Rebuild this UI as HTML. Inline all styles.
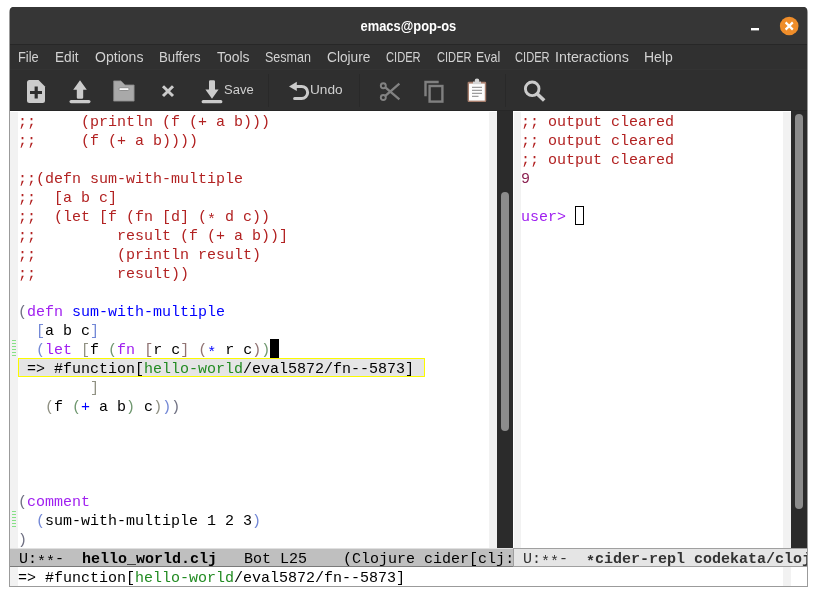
<!DOCTYPE html>
<html lang="en">
<head>
<meta charset="utf-8">
<title>emacs@pop-os</title>
<style>
html,body{margin:0;padding:0;background:#fff;}
body{width:817px;height:596px;position:relative;overflow:hidden;font-family:"Liberation Sans",sans-serif;}
.abs{position:absolute;}
#chrome,#ed{will-change:transform;}
#win{position:absolute;left:9px;top:7px;width:799px;height:580px;background:#9b9b9b;border-radius:5px 5px 0 0;}
#chrome{position:absolute;left:10px;top:7px;width:797px;height:104px;background:#2e2e2e;border-radius:4px 4px 0 0;overflow:hidden;}
#title{position:absolute;left:0;top:0;width:797px;height:37px;background:#363636;}
#tsep{position:absolute;left:0;top:37px;width:797px;height:1px;background:#272727;}
#menubar{position:absolute;left:0;top:38px;width:797px;height:24px;background:#303030;}
#toolbar{position:absolute;left:0;top:62px;width:797px;height:42px;background:#2f2f2f;box-shadow:inset 0 1px 0 #333,inset 0 -1px 0 #272727;}
#ttext{position:absolute;left:0;width:797px;top:8.5px;height:20px;line-height:20px;text-align:center;color:#fff;font-weight:bold;font-size:15px;transform:scaleX(0.86);transform-origin:398px 50%;}
.mi{position:absolute;top:3px;height:18px;line-height:18px;font-size:14.5px;color:#d2d2d2;white-space:pre;transform-origin:0 50%;}
.tl{position:absolute;top:12px;height:18px;line-height:18px;font-size:13px;color:#cfcfcf;white-space:pre;transform-origin:0 50%;}
.vsep{position:absolute;top:5px;width:1px;height:33px;background:#292929;}
#ed{position:absolute;left:10px;top:111px;width:797px;height:475px;background:#fff;overflow:hidden;}
.fr{position:absolute;background:#f2f2f2;width:8px;}
.sb{position:absolute;background:#2b2b2b;width:16px;}
.th{position:absolute;background:#8c8c8c;border-radius:4px;width:8px;}
.code{font-family:"Liberation Mono","DejaVu Sans Mono",monospace;font-size:15px;}
.ln{position:absolute;height:19px;line-height:24.4px;white-space:pre;color:#000;letter-spacing:0;}
.a{position:relative;top:2.6px;}
.c{color:#b22222;}
.k{color:#a020f0;}
.f{color:#0000ff;}
.t{color:#228b22;}
.s{color:#8b2252;}
.d1{color:#707183;}.d2{color:#7388d6;}.d3{color:#909183;}.d4{color:#709870;}.d5{color:#907373;}
.ml{position:absolute;height:19px;line-height:19px;white-space:pre;box-sizing:border-box;overflow:hidden;}
</style>
</head>
<body>
<div id="win"></div>
<div id="chrome">
  <div id="title"></div>
  <div id="ttext">emacs@pop-os</div>
  <div id="tsep"></div>
  <!-- window controls -->
  <svg class="abs" style="left:730px;top:0" width="67" height="38" viewBox="0 0 67 38">
    <rect x="11" y="21" width="8" height="2.4" fill="#fff"/>
    <circle cx="49.2" cy="19" r="9.3" fill="#ef8d2a"/>
    <path d="M45.6 15.4 L52.8 22.6 M52.8 15.4 L45.6 22.6" stroke="#fff" stroke-width="2.2" fill="none"/>
  </svg>
  <div id="menubar">
    <span class="mi" id="m0" style="left:7.8px;transform:scaleX(0.886)">File</span>
    <span class="mi" id="m1" style="left:44.7px;transform:scaleX(0.938)">Edit</span>
    <span class="mi" id="m2" style="left:84.5px;transform:scaleX(0.969)">Options</span>
    <span class="mi" id="m3" style="left:149.0px;transform:scaleX(0.911)">Buffers</span>
    <span class="mi" id="m4" style="left:206.5px;transform:scaleX(0.961)">Tools</span>
    <span class="mi" id="m5" style="left:254.5px;transform:scaleX(0.865)">Sesman</span>
    <span class="mi" id="m6" style="left:316.5px;transform:scaleX(0.944)">Clojure</span>
    <span class="mi" id="m7" style="left:375.8px;transform:scaleX(0.768)">CIDER</span>
    <span class="mi" id="m8" style="left:426.5px;transform:scaleX(0.766)">CIDER</span>
    <span class="mi" id="m9" style="left:465.9px;transform:scaleX(0.856)">Eval</span>
    <span class="mi" id="m10" style="left:505.2px;transform:scaleX(0.768)">CIDER</span>
    <span class="mi" id="m11" style="left:544.5px;transform:scaleX(0.985)">Interactions</span>
    <span class="mi" id="m12" style="left:634.0px;transform:scaleX(0.964)">Help</span>
  </div>
  <div id="toolbar">
    <span class="tl" style="left:214px">Save</span>
    <span class="tl" style="left:300px;transform:scaleX(1.05)">Undo</span>
    <div class="vsep" style="left:258px"></div>
    <div class="vsep" style="left:349px"></div>
    <div class="vsep" style="left:495px"></div>
    <svg class="abs" style="left:0;top:0" width="797" height="42" viewBox="10 69 797 42">
      <!-- new file -->
      <path d="M29.5 80 H38.5 L45 86.5 V100.5 Q45 103 42.5 103 H29.5 Q27 103 27 100.5 V82.5 Q27 80 29.5 80 Z" fill="#cbcbcb"/>
      <path d="M30 92.5 H42 M36.2 86.6 V98.6" stroke="#2e2e2e" stroke-width="3.2" fill="none"/>
      <!-- open (upload) -->
      <path d="M80 80.2 L86.8 89.8 H83.2 V97.5 Q83.2 98.8 81.9 98.8 H78.1 Q76.8 98.8 76.8 97.5 V89.8 H73.2 Z" fill="#cbcbcb"/>
      <rect x="69.5" y="100" width="21" height="3.2" rx="1.6" fill="#cbcbcb"/>
      <!-- folder -->
      <path d="M113.7 80.9 H121 L125 85 H134.1 V101.1 H113.7 Z" fill="#a9a9a9" stroke="#8a8a8a" stroke-width="0.8"/>
      <rect x="118.9" y="87.7" width="10.2" height="2.8" rx="1.2" fill="#fafafa" stroke="#8c8c8c" stroke-width="1"/>
      <!-- close x -->
      <path d="M163 86.2 L173 96 M173 86.2 L163 96" stroke="#cbcbcb" stroke-width="3" fill="none"/>
      <!-- save (download) -->
      <path d="M212 98.8 L205.4 89.6 H209 V81.6 Q209 80.3 210.3 80.3 H213.7 Q215 80.3 215 81.6 V89.6 H218.6 Z" fill="#cbcbcb"/>
      <rect x="201.6" y="100.1" width="20.8" height="3.1" rx="1.55" fill="#cbcbcb"/>
      <!-- undo -->
      <path d="M289 86.4 L296.8 81.8 V91 Z" fill="#cbcbcb"/>
      <path d="M296 86.4 H301.6 A6.05 6.05 0 0 1 301.6 98.5 H294.6" stroke="#cbcbcb" stroke-width="3" fill="none" stroke-linecap="round"/>
      <!-- cut -->
      <g stroke="#828282" fill="none" stroke-width="1.9">
        <circle cx="383.3" cy="85.8" r="2.5"/>
        <circle cx="383.3" cy="97.5" r="2.5"/>
        <path d="M385.3 87.4 L399.4 99.3 M385.3 95.9 L399.4 83.7" stroke-width="2.3"/>
      </g>
      <!-- copy -->
      <g stroke="#808080" fill="none" stroke-width="2.4">
        <path d="M425.5 96.3 V82 H438.7"/>
        <rect x="429.6" y="86" width="12.8" height="15.6"/>
      </g>
      <!-- paste -->
      <rect x="467.6" y="81.8" width="18.6" height="20.2" rx="1.2" fill="#a87f6e"/>
      <rect x="469" y="83.6" width="15.8" height="17" fill="#fdfdfd"/>
      <circle cx="477" cy="80.8" r="2.3" fill="#d5d5d5"/>
      <rect x="473" y="81.6" width="8" height="2.6" fill="#d5d5d5"/>
      <path d="M472 87.3 H482 M472 90.3 H482 M472 93.3 H482 M472 96.3 H478.5" stroke="#777" stroke-width="0.9" fill="none"/>
      <!-- search -->
      <circle cx="532.2" cy="88.8" r="6.8" stroke="#cbcbcb" stroke-width="2.9" fill="none"/>
      <path d="M537.3 94 L544.2 100.5" stroke="#cbcbcb" stroke-width="3.6" fill="none"/>
    </svg>
  </div>
</div>

<div id="ed" class="code">
  <!-- fringes -->
  <div class="fr" style="left:0;top:1px;height:436px"></div>
  <div class="fr" style="left:479px;top:1px;height:436px"></div>
  <div class="fr" style="left:503.5px;top:1px;height:436px;width:7.5px"></div>
  <div class="fr" style="left:773px;top:1px;height:436px"></div>
  <div class="fr" style="left:0;top:456px;height:19px"></div>
  <div class="fr" style="left:773px;top:456px;height:19px"></div>
  <!-- scrollbars -->
  <div class="sb" style="left:487px;top:0;height:437px"></div>
  <div class="th" style="left:491px;top:80.5px;height:239.5px"></div>
  <div class="sb" style="left:781px;top:0;height:437px"></div>
  <div class="th" style="left:785px;top:3px;height:395px"></div>

  <!-- left buffer -->
  <div class="ln c" style="left:8px;top:0px">;;     (println (f (+ a b)))</div>
  <div class="ln c" style="left:8px;top:19px">;;     (f (+ a b))))</div>
  <div class="ln c" style="left:8px;top:57px">;;(defn sum-with-multiple</div>
  <div class="ln c" style="left:8px;top:76px">;;  [a b c]</div>
  <div class="ln c" style="left:8px;top:95px">;;  (let [f (fn [d] (<span class="a">*</span> d c))</div>
  <div class="ln c" style="left:8px;top:114px">;;         result (f (+ a b))]</div>
  <div class="ln c" style="left:8px;top:133px">;;         (println result)</div>
  <div class="ln c" style="left:8px;top:152px">;;         result))</div>
  <div class="ln" style="left:8px;top:190px"><span class="d1">(</span><span class="k">defn</span> <span class="f">sum-with-multiple</span></div>
  <div class="ln" style="left:8px;top:209px">  <span class="d2">[</span>a b c<span class="d2">]</span></div>
  <div class="ln" style="left:8px;top:228px">  <span class="d2">(</span><span class="k">let</span> <span class="d3">[</span>f <span class="d4">(</span><span class="k">fn</span> <span class="d5">[</span>r c<span class="d5">]</span> <span class="d5">(</span><span class="f a">*</span> r c<span class="d5">)</span><span class="d4">)</span></div>
  <div class="abs" style="left:260px;top:228px;width:9px;height:19px;background:#000"></div>
  <div class="abs" style="left:8px;top:247px;width:407px;height:19px;background:#e5e5e5;box-sizing:border-box;border:1px solid #fbfb00"></div>
  <div class="ln" style="left:8px;top:247px"> =&gt; #function[<span class="t">hello-world</span>/eval5872/fn--5873]</div>
  <div class="ln" style="left:8px;top:266px">        <span class="d3">]</span></div>
  <div class="ln" style="left:8px;top:285px">   <span class="d3">(</span>f <span class="d4">(</span><span class="f">+</span> a b<span class="d4">)</span> c<span class="d3">)</span><span class="d2">)</span><span class="d1">)</span></div>
  <div class="ln" style="left:8px;top:380px"><span class="d1">(</span><span class="k">comment</span></div>
  <div class="ln" style="left:8px;top:399px">  <span class="d2">(</span>sum-with-multiple 1 2 3<span class="d2">)</span></div>
  <div class="ln" style="left:8px;top:418px"><span class="d1">)</span></div>
  <!-- fringe indicators -->
  <svg class="abs" style="left:0;top:228px" width="8" height="19" viewBox="0 0 8 19"><path d="M2 1.5H6M2 4.5H6M2 7.5H6M2 10.5H6M2 13.5H6M2 16.5H6" stroke="#86e186" stroke-width="1"/></svg>
  <svg class="abs" style="left:0;top:399px" width="8" height="19" viewBox="0 0 8 19"><path d="M2 1.5H6M2 4.5H6M2 7.5H6M2 10.5H6M2 13.5H6M2 16.5H6" stroke="#86e186" stroke-width="1"/></svg>

  <!-- right buffer -->
  <div class="ln c" style="left:511px;top:0px">;; output cleared</div>
  <div class="ln c" style="left:511px;top:19px">;; output cleared</div>
  <div class="ln c" style="left:511px;top:38px">;; output cleared</div>
  <div class="ln s" style="left:511px;top:57px">9</div>
  <div class="ln k" style="left:511px;top:95px">user&gt; </div>
  <div class="abs" style="left:565px;top:95px;width:9px;height:19px;box-sizing:border-box;border:1px solid #000"></div>

  <!-- mode lines -->
  <div class="ml" style="left:0;top:437px;width:504px;background:#bfbfbf;border-top:1px solid #e0e0e0;border-bottom:1px solid #7a7a7a;line-height:21.4px;color:#000"> U:<span class="a">**</span>-  <b>hello_world.clj</b>   Bot L25    (Clojure cider[clj:codekata</div>
  <div class="ml" style="left:503px;top:437px;width:294px;background:#e5e5e5;border:1px solid #a0a0a0;border-right:0;line-height:21.4px;color:#333"> U:<span class="a">**</span>-  <b><span class="a">*</span>cider-repl codekata/clojure</b></div>
  <!-- minibuffer -->
  <div class="ln" style="left:8px;top:456px">=&gt; #function[<span class="t">hello-world</span>/eval5872/fn--5873]</div>
</div>
</body>
</html>
